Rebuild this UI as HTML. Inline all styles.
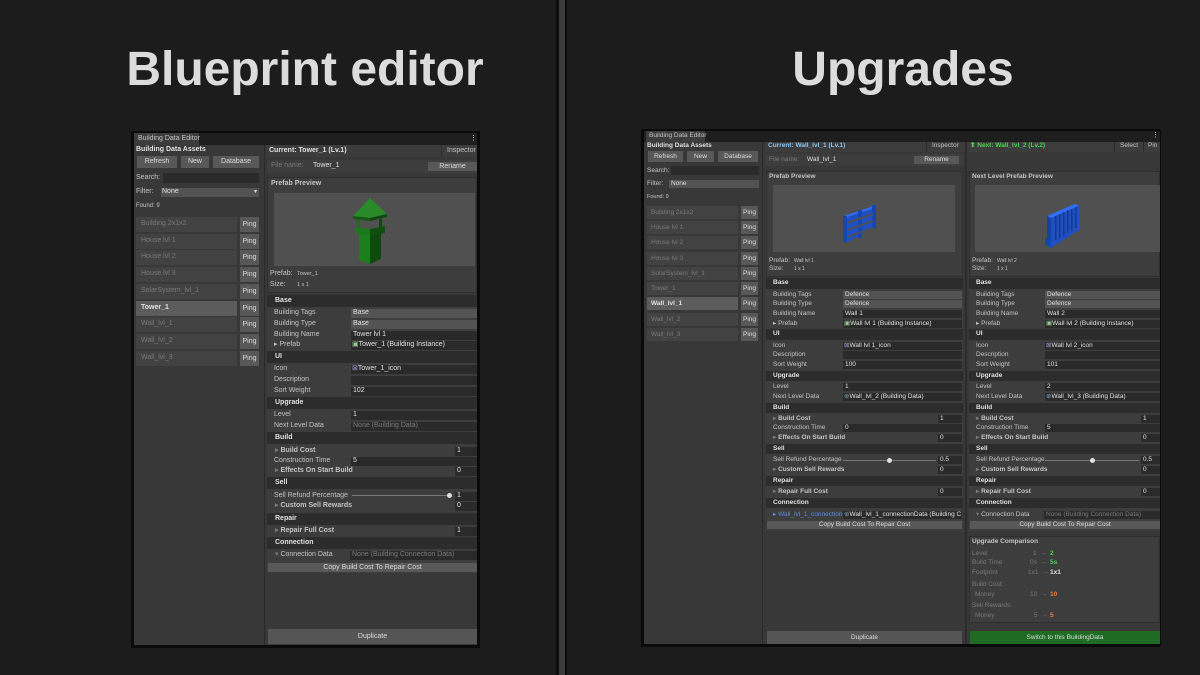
<!DOCTYPE html>
<html><head><meta charset="utf-8"><style>
*{margin:0;padding:0;box-sizing:border-box}
body{width:1200px;height:675px;background:#1c1c1c;position:relative;overflow:hidden;font-family:"Liberation Sans",sans-serif;color:#c4c4c4}
div{position:absolute}
.t{font-size:7px;line-height:10px;height:10px;white-space:nowrap}
.b{font-weight:bold}
.d{color:#7a7a7a}
.w{color:#e0e0e0}
.h{background:#2c2c2c}
.r{background:#3d3d3d}
.f{background:#2a2a2a}
.dd{background:#535353}
.btn{background:#585858;color:#ddd;text-align:center;font-size:7px}
.title{font-size:48px;font-weight:bold;color:#dcdcdc;top:40px;line-height:60px;white-space:nowrap;text-align:center}
</style></head><body>

<div class="title" style="left:105px;width:400px">Blueprint editor</div>
<div class="title" style="left:703px;width:400px">Upgrades</div>

<div style="left:556px;top:0;width:11px;height:675px;background:#0d0d0d"></div>
<div style="left:559px;top:0;width:6px;height:675px;background:#3a3a3a"></div>

<!-- ================= LEFT WINDOW ================= -->
<div style="left:131px;top:131px;width:349px;height:517px;background:#0a0a0a"></div>
<div style="left:134px;top:133px;width:343px;height:512px;background:#383838"></div>
<div style="left:134px;top:133px;width:343px;height:12px;background:#1e1e1e"></div>
<div style="left:134px;top:133px;width:65px;height:12px;background:#3c3c3c"></div>
<div class="t" style="left:138px;top:134px">Building Data Editor</div>
<div class="t w" style="left:470px;top:134px">⋮</div>
<div style="left:264px;top:145px;width:1px;height:500px;background:#2a2a2a"></div>

<div class="t b w" style="left:136px;top:145px">Building Data Assets</div>
<div class="btn" style="left:137px;top:156px;width:40px;height:12px;line-height:12px">Refresh</div>
<div class="btn" style="left:181px;top:156px;width:28px;height:12px;line-height:12px">New</div>
<div class="btn" style="left:213px;top:156px;width:46px;height:12px;line-height:12px">Database</div>
<div class="t" style="left:136px;top:173px">Search:</div>
<div class="f" style="left:163px;top:173px;width:96px;height:10px"></div>
<div class="t" style="left:136px;top:187px">Filter:</div>
<div class="dd" style="left:161px;top:188px;width:98px;height:9px"></div>
<div class="t w" style="left:162px;top:187px">None</div>
<div class="t w" style="left:253px;top:187px;font-size:5px">▼</div>
<div class="t" style="left:136px;top:201px;font-size:6px">Found: 9</div>

<div style="left:136px;top:217px;width:101px;height:15px;background:#424242"></div><div class="btn" style="left:240px;top:217px;width:19px;height:15px;line-height:15px">Ping</div><div class="t d" style="left:141px;top:219px">Building 2x1x2</div>
<div style="left:136px;top:234px;width:101px;height:15px;background:#424242"></div><div class="btn" style="left:240px;top:234px;width:19px;height:15px;line-height:15px">Ping</div><div class="t d" style="left:141px;top:236px">House lvl 1</div>
<div style="left:136px;top:250px;width:101px;height:15px;background:#424242"></div><div class="btn" style="left:240px;top:250px;width:19px;height:15px;line-height:15px">Ping</div><div class="t d" style="left:141px;top:252px">House lvl 2</div>
<div style="left:136px;top:267px;width:101px;height:15px;background:#424242"></div><div class="btn" style="left:240px;top:267px;width:19px;height:15px;line-height:15px">Ping</div><div class="t d" style="left:141px;top:269px">House lvl 3</div>
<div style="left:136px;top:284px;width:101px;height:15px;background:#424242"></div><div class="btn" style="left:240px;top:284px;width:19px;height:15px;line-height:15px">Ping</div><div class="t d" style="left:141px;top:286px">SolarSystem_lvl_1</div>
<div style="left:136px;top:301px;width:101px;height:15px;background:#5c5c5c"></div><div class="btn" style="left:240px;top:301px;width:19px;height:15px;line-height:15px">Ping</div><div class="t b w" style="left:141px;top:303px">Tower_1</div>
<div style="left:136px;top:317px;width:101px;height:15px;background:#424242"></div><div class="btn" style="left:240px;top:317px;width:19px;height:15px;line-height:15px">Ping</div><div class="t d" style="left:141px;top:319px">Wall_lvl_1</div>
<div style="left:136px;top:334px;width:101px;height:15px;background:#424242"></div><div class="btn" style="left:240px;top:334px;width:19px;height:15px;line-height:15px">Ping</div><div class="t d" style="left:141px;top:336px">Wall_lvl_2</div>
<div style="left:136px;top:351px;width:101px;height:15px;background:#424242"></div><div class="btn" style="left:240px;top:351px;width:19px;height:15px;line-height:15px">Ping</div><div class="t d" style="left:141px;top:353px">Wall_lvl_3</div>

<!-- right pane -->
<div style="left:266px;top:145px;width:211px;height:12px;background:#3c3c3c"></div>
<div class="t b w" style="left:269px;top:146px">Current: Tower_1 (Lv.1)</div>
<div style="left:441px;top:145px;width:1px;height:12px;background:#2a2a2a"></div>
<div class="t" style="left:447px;top:146px">Inspector</div>
<div class="r" style="left:267px;top:160px;width:210px;height:13px"></div>
<div class="t d" style="left:271px;top:161px">File name:</div>
<div class="t w" style="left:313px;top:161px">Tower_1</div>
<div class="btn" style="left:428px;top:162px;width:49px;height:9px;line-height:9px">Rename</div>

<div class="r" style="left:267px;top:177px;width:210px;height:116px;border:1px solid #2e2e2e"></div>
<div class="t b" style="left:271px;top:179px">Prefab Preview</div>
<div style="left:274px;top:193px;width:201px;height:73px;background:#505050"></div>
<svg style="position:absolute;left:345px;top:196px" width="50" height="70" viewBox="0 0 50 70">
<polygon points="25,2 8,20 25,22 42,18" fill="#2a8a2a"/><polygon points="8,20 25,22 25,25 8,23" fill="#145a14"/><polygon points="25,22 42,18 42,21 25,25" fill="#0f480f"/>
<rect x="12" y="24" width="3" height="8" fill="#157015"/><rect x="34" y="23" width="3" height="8" fill="#0f480f"/>
<polygon points="10,31 25,33 25,40 10,37" fill="#1a7a1a"/><polygon points="25,33 40,30 40,37 25,40" fill="#0f500f"/>
<polygon points="14,38 25,40 25,68 14,64" fill="#1b7f1b"/><polygon points="25,40 36,37 36,63 25,68" fill="#0e4a0e"/>
</svg>
<div class="t" style="left:270px;top:269px">Prefab:</div><div class="t" style="left:297px;top:269px;font-size:5.5px">Tower_1</div>
<div class="t" style="left:270px;top:280px">Size:</div><div class="t" style="left:297px;top:280px;font-size:5.5px">1 x 1</div>

<div class="r" style="left:267px;top:295px;width:210px;height:278px"></div>
<div class="h" style="left:267px;top:295px;width:210px;height:12px"></div><div class="t b w" style="left:275px;top:296px">Base</div>
<div class="t" style="left:274px;top:308px">Building Tags</div><div class="dd" style="left:351px;top:309px;width:126px;height:9px"></div><div class="t w" style="left:353px;top:308px">Base</div>
<div class="t" style="left:274px;top:319px">Building Type</div><div class="dd" style="left:351px;top:320px;width:126px;height:9px"></div><div class="t w" style="left:353px;top:319px">Base</div>
<div class="t" style="left:274px;top:330px">Building Name</div><div class="f" style="left:351px;top:331px;width:126px;height:9px"></div><div class="t w" style="left:353px;top:330px">Tower lvl 1</div>
<div class="t" style="left:274px;top:340px">▸ Prefab</div><div class="f" style="left:351px;top:341px;width:126px;height:9px"></div><div class="t w" style="left:352px;top:340px"><span style="color:#9c9">▣</span>Tower_1 (Building Instance)</div>
<div class="h" style="left:267px;top:351px;width:210px;height:12px"></div><div class="t b w" style="left:275px;top:352px">UI</div>
<div class="t" style="left:274px;top:364px">Icon</div><div class="f" style="left:351px;top:365px;width:126px;height:9px"></div><div class="t w" style="left:352px;top:364px"><span style="color:#99c">⊠</span>Tower_1_icon</div>
<div class="t" style="left:274px;top:375px">Description</div><div class="f" style="left:351px;top:376px;width:126px;height:9px"></div>
<div class="t" style="left:274px;top:386px">Sort Weight</div><div class="f" style="left:351px;top:387px;width:126px;height:9px"></div><div class="t w" style="left:353px;top:386px">102</div>
<div class="h" style="left:267px;top:397px;width:210px;height:12px"></div><div class="t b w" style="left:275px;top:398px">Upgrade</div>
<div class="t" style="left:274px;top:410px">Level</div><div class="f" style="left:351px;top:411px;width:126px;height:9px"></div><div class="t w" style="left:353px;top:410px">1</div>
<div class="t" style="left:274px;top:421px">Next Level Data</div><div class="f" style="left:351px;top:422px;width:126px;height:9px"></div><div class="t d" style="left:353px;top:421px">None (Building Data)</div>
<div class="h" style="left:267px;top:432px;width:210px;height:12px"></div><div class="t b w" style="left:275px;top:433px">Build</div>
<div class="t b" style="left:275px;top:446px"><span class="d">▸</span> Build Cost</div><div class="f" style="left:455px;top:447px;width:22px;height:9px"></div><div class="t w" style="left:457px;top:446px">1</div>
<div class="t" style="left:274px;top:456px">Construction Time</div><div class="f" style="left:351px;top:457px;width:126px;height:9px"></div><div class="t w" style="left:353px;top:456px">5</div>
<div class="t b" style="left:275px;top:466px"><span class="d">▸</span> Effects On Start Build</div><div class="f" style="left:455px;top:467px;width:22px;height:9px"></div><div class="t w" style="left:457px;top:466px">0</div>
<div class="h" style="left:267px;top:477px;width:210px;height:12px"></div><div class="t b w" style="left:275px;top:478px">Sell</div>
<div class="t" style="left:274px;top:491px">Sell Refund Percentage</div><div style="left:352px;top:495px;width:97px;height:1px;background:#777"></div><div style="left:447px;top:493px;width:5px;height:5px;border-radius:50%;background:#ddd"></div><div class="f" style="left:455px;top:492px;width:22px;height:9px"></div><div class="t w" style="left:457px;top:491px">1</div>
<div class="t b" style="left:275px;top:501px"><span class="d">▸</span> Custom Sell Rewards</div><div class="f" style="left:455px;top:502px;width:22px;height:9px"></div><div class="t w" style="left:457px;top:501px">0</div>
<div class="h" style="left:267px;top:513px;width:210px;height:12px"></div><div class="t b w" style="left:275px;top:514px">Repair</div>
<div class="t b" style="left:275px;top:526px"><span class="d">▸</span> Repair Full Cost</div><div class="f" style="left:455px;top:527px;width:22px;height:9px"></div><div class="t w" style="left:457px;top:526px">1</div>
<div class="h" style="left:267px;top:537px;width:210px;height:12px"></div><div class="t b w" style="left:275px;top:538px">Connection</div>
<div class="t" style="left:275px;top:550px"><span class="d">▾</span> Connection Data</div><div class="f" style="left:350px;top:551px;width:127px;height:9px"></div><div class="t d" style="left:352px;top:550px">None (Building Connection Data)</div>
<div class="btn" style="left:268px;top:563px;width:209px;height:9px;line-height:9px">Copy Build Cost To Repair Cost</div>
<div class="btn" style="left:268px;top:629px;width:209px;height:15px;line-height:15px;background:#555">Duplicate</div>

<!-- ================= RIGHT WINDOW ================= -->
<div style="left:641px;top:129px;width:520px;height:518px;background:#0a0a0a"></div>
<div style="left:644px;top:131px;width:516px;height:513px;background:#383838"></div>
<div style="left:644px;top:131px;width:516px;height:11px;background:#1e1e1e"></div>
<div style="left:646px;top:131px;width:59px;height:11px;background:#3c3c3c"></div>
<div class="t" style="left:649px;top:131px;font-size:6.5px">Building Data Editor</div>
<div class="t w" style="left:1152px;top:131px">⋮</div>
<div style="left:762px;top:142px;width:1px;height:502px;background:#2a2a2a"></div>

<div class="t b w" style="left:647px;top:141px;font-size:6.5px">Building Data Assets</div>
<div class="btn" style="left:648px;top:151px;width:35px;height:11px;line-height:11px;font-size:6.5px">Refresh</div>
<div class="btn" style="left:687px;top:151px;width:27px;height:11px;line-height:11px;font-size:6.5px">New</div>
<div class="btn" style="left:718px;top:151px;width:40px;height:11px;line-height:11px;font-size:6.5px">Database</div>
<div class="t" style="left:647px;top:166px;font-size:6.5px">Search:</div>
<div class="f" style="left:671px;top:166px;width:88px;height:9px"></div>
<div class="t" style="left:647px;top:179px;font-size:6.5px">Filter:</div>
<div class="dd" style="left:669px;top:180px;width:90px;height:8px"></div>
<div class="t w" style="left:671px;top:179px;font-size:6.5px">None</div>
<div class="t" style="left:647px;top:192px;font-size:5.5px">Found: 9</div>

<div style="left:647px;top:206px;width:91px;height:13px;background:#424242"></div><div class="btn" style="left:741px;top:206px;width:17px;height:13px;line-height:13px;font-size:6.5px">Ping</div><div class="t d" style="left:651px;top:208px;font-size:6.5px">Building 2x1x2</div>
<div style="left:647px;top:221px;width:91px;height:13px;background:#424242"></div><div class="btn" style="left:741px;top:221px;width:17px;height:13px;line-height:13px;font-size:6.5px">Ping</div><div class="t d" style="left:651px;top:223px;font-size:6.5px">House lvl 1</div>
<div style="left:647px;top:236px;width:91px;height:13px;background:#424242"></div><div class="btn" style="left:741px;top:236px;width:17px;height:13px;line-height:13px;font-size:6.5px">Ping</div><div class="t d" style="left:651px;top:238px;font-size:6.5px">House lvl 2</div>
<div style="left:647px;top:252px;width:91px;height:13px;background:#424242"></div><div class="btn" style="left:741px;top:252px;width:17px;height:13px;line-height:13px;font-size:6.5px">Ping</div><div class="t d" style="left:651px;top:254px;font-size:6.5px">House lvl 3</div>
<div style="left:647px;top:267px;width:91px;height:13px;background:#424242"></div><div class="btn" style="left:741px;top:267px;width:17px;height:13px;line-height:13px;font-size:6.5px">Ping</div><div class="t d" style="left:651px;top:269px;font-size:6.5px">SolarSystem_lvl_1</div>
<div style="left:647px;top:282px;width:91px;height:13px;background:#424242"></div><div class="btn" style="left:741px;top:282px;width:17px;height:13px;line-height:13px;font-size:6.5px">Ping</div><div class="t d" style="left:651px;top:284px;font-size:6.5px">Tower_1</div>
<div style="left:647px;top:297px;width:91px;height:13px;background:#5c5c5c"></div><div class="btn" style="left:741px;top:297px;width:17px;height:13px;line-height:13px;font-size:6.5px">Ping</div><div class="t b w" style="left:651px;top:299px;font-size:6.5px">Wall_lvl_1</div>
<div style="left:647px;top:313px;width:91px;height:13px;background:#424242"></div><div class="btn" style="left:741px;top:313px;width:17px;height:13px;line-height:13px;font-size:6.5px">Ping</div><div class="t d" style="left:651px;top:315px;font-size:6.5px">Wall_lvl_2</div>
<div style="left:647px;top:328px;width:91px;height:13px;background:#424242"></div><div class="btn" style="left:741px;top:328px;width:17px;height:13px;line-height:13px;font-size:6.5px">Ping</div><div class="t d" style="left:651px;top:330px;font-size:6.5px">Wall_lvl_3</div>

<!-- middle pane -->
<div style="left:765px;top:142px;width:395px;height:10px;background:#3c3c3c"></div>
<div class="t b" style="left:768px;top:141px;font-size:6.5px;color:#8cc4f0">Current: Wall_lvl_1 (Lv.1)</div>
<div style="left:926px;top:142px;width:1px;height:10px;background:#2a2a2a"></div>
<div class="t" style="left:932px;top:141px;font-size:6.5px">Inspector</div>
<div style="left:965px;top:142px;width:2px;height:502px;background:#2c2c2c"></div>
<div class="t b" style="left:970px;top:141px;font-size:6.5px;color:#4fd24f">⬆ Next: Wall_lvl_2 (Lv.2)</div>
<div style="left:1114px;top:142px;width:1px;height:10px;background:#2a2a2a"></div>
<div class="t" style="left:1120px;top:141px;font-size:6.5px">Select</div>
<div style="left:1143px;top:142px;width:1px;height:10px;background:#2a2a2a"></div>
<div class="t" style="left:1148px;top:141px;font-size:6.5px">Pin</div>

<div class="r" style="left:766px;top:154px;width:197px;height:12px"></div>
<div class="t d" style="left:769px;top:155px;font-size:6.5px">File name:</div>
<div class="t w" style="left:807px;top:155px;font-size:6.5px">Wall_lvl_1</div>
<div class="btn" style="left:914px;top:156px;width:45px;height:8px;line-height:8px;font-size:6.5px">Rename</div>

<div class="r" style="left:766px;top:171px;width:197px;height:106px;border:1px solid #2e2e2e"></div>
<div class="t b" style="left:769px;top:172px;font-size:6.5px">Prefab Preview</div>
<div style="left:773px;top:185px;width:182px;height:67px;background:#505050"></div>
<svg style="position:absolute;left:840px;top:200px" width="40" height="45" viewBox="0 0 40 45">
<polygon points="4,16 34,6 36,26 8,42" fill="#1f4fc0"/>
<polygon points="4,16 34,6 34,8 4,18" fill="#3070ff"/>
<rect x="3" y="16" width="4" height="26" fill="#1846b0"/><rect x="18" y="10" width="4" height="28" fill="#1846b0"/><rect x="32" y="5" width="4" height="24" fill="#1846b0"/>
<polygon points="7,22 33,13 33,15 7,24" fill="#505050"/><polygon points="7,29 33,20 33,22 7,31" fill="#505050"/><polygon points="7,36 33,27 33,29 7,38" fill="#505050"/>
</svg>
<div class="t" style="left:769px;top:256px;font-size:6.5px">Prefab:</div><div class="t" style="left:794px;top:256px;font-size:5px">Wall lvl 1</div>
<div class="t" style="left:769px;top:264px;font-size:6.5px">Size:</div><div class="t" style="left:794px;top:264px;font-size:5px">1 x 1</div>

<div class="r" style="left:766px;top:278px;width:197px;height:253px"></div>
<div class="h" style="left:766px;top:278px;width:197px;height:11px"></div><div class="t b w" style="left:773px;top:278px;font-size:6.5px">Base</div>
<div class="t" style="left:773px;top:290px;font-size:6.5px">Building Tags</div><div class="dd" style="left:843px;top:291px;width:119px;height:8px"></div><div class="t w" style="left:845px;top:290px;font-size:6.5px">Defence</div>
<div class="t" style="left:773px;top:299px;font-size:6.5px">Building Type</div><div class="dd" style="left:843px;top:300px;width:119px;height:8px"></div><div class="t w" style="left:845px;top:299px;font-size:6.5px">Defence</div>
<div class="t" style="left:773px;top:309px;font-size:6.5px">Building Name</div><div class="f" style="left:843px;top:310px;width:119px;height:8px"></div><div class="t w" style="left:845px;top:309px;font-size:6.5px">Wall 1</div>
<div class="t" style="left:773px;top:319px;font-size:6.5px">▸ Prefab</div><div class="f" style="left:843px;top:320px;width:119px;height:8px"></div><div class="t w" style="left:844px;top:319px;font-size:6.5px"><span style="color:#9c9">▣</span>Wall lvl 1 (Building Instance)</div>
<div class="h" style="left:766px;top:329px;width:197px;height:11px"></div><div class="t b w" style="left:773px;top:329px;font-size:6.5px">UI</div>
<div class="t" style="left:773px;top:341px;font-size:6.5px">Icon</div><div class="f" style="left:843px;top:342px;width:119px;height:8px"></div><div class="t w" style="left:844px;top:341px;font-size:6.5px"><span style="color:#99c">⊠</span>Wall lvl 1_icon</div>
<div class="t" style="left:773px;top:350px;font-size:6.5px">Description</div><div class="f" style="left:843px;top:351px;width:119px;height:8px"></div>
<div class="t" style="left:773px;top:360px;font-size:6.5px">Sort Weight</div><div class="f" style="left:843px;top:361px;width:119px;height:8px"></div><div class="t w" style="left:845px;top:360px;font-size:6.5px">100</div>
<div class="h" style="left:766px;top:371px;width:197px;height:10px"></div><div class="t b w" style="left:773px;top:371px;font-size:6.5px">Upgrade</div>
<div class="t" style="left:773px;top:382px;font-size:6.5px">Level</div><div class="f" style="left:843px;top:383px;width:119px;height:8px"></div><div class="t w" style="left:845px;top:382px;font-size:6.5px">1</div>
<div class="t" style="left:773px;top:392px;font-size:6.5px">Next Level Data</div><div class="f" style="left:843px;top:393px;width:119px;height:8px"></div><div class="t w" style="left:844px;top:392px;font-size:6.5px"><span style="color:#7ab">⊛</span>Wall_lvl_2 (Building Data)</div>
<div class="h" style="left:766px;top:403px;width:197px;height:10px"></div><div class="t b w" style="left:773px;top:403px;font-size:6.5px">Build</div>
<div class="t b" style="left:773px;top:414px;font-size:6.5px"><span class="d">▸</span> Build Cost</div><div class="f" style="left:938px;top:415px;width:24px;height:8px"></div><div class="t w" style="left:940px;top:414px;font-size:6.5px">1</div>
<div class="t" style="left:773px;top:423px;font-size:6.5px">Construction Time</div><div class="f" style="left:843px;top:424px;width:119px;height:8px"></div><div class="t w" style="left:845px;top:423px;font-size:6.5px">0</div>
<div class="t b" style="left:773px;top:433px;font-size:6.5px"><span class="d">▸</span> Effects On Start Build</div><div class="f" style="left:938px;top:434px;width:24px;height:8px"></div><div class="t w" style="left:940px;top:433px;font-size:6.5px">0</div>
<div class="h" style="left:766px;top:444px;width:197px;height:10px"></div><div class="t b w" style="left:773px;top:444px;font-size:6.5px">Sell</div>
<div class="t" style="left:773px;top:455px;font-size:6.5px">Sell Refund Percentage</div><div style="left:843px;top:460px;width:93px;height:1px;background:#777"></div><div style="left:887px;top:458px;width:5px;height:5px;border-radius:50%;background:#ddd"></div><div class="f" style="left:938px;top:456px;width:24px;height:8px"></div><div class="t w" style="left:940px;top:455px;font-size:6.5px">0.5</div>
<div class="t b" style="left:773px;top:465px;font-size:6.5px"><span class="d">▸</span> Custom Sell Rewards</div><div class="f" style="left:938px;top:466px;width:24px;height:8px"></div><div class="t w" style="left:940px;top:465px;font-size:6.5px">0</div>
<div class="h" style="left:766px;top:476px;width:197px;height:10px"></div><div class="t b w" style="left:773px;top:476px;font-size:6.5px">Repair</div>
<div class="t b" style="left:773px;top:487px;font-size:6.5px"><span class="d">▸</span> Repair Full Cost</div><div class="f" style="left:938px;top:488px;width:24px;height:8px"></div><div class="t w" style="left:940px;top:487px;font-size:6.5px">0</div>
<div class="h" style="left:766px;top:498px;width:197px;height:10px"></div><div class="t b w" style="left:773px;top:498px;font-size:6.5px">Connection</div>
<div class="t" style="left:773px;top:510px;font-size:6.5px;color:#5a8fe0;width:69px;overflow:hidden">▸ Wall_lvl_1_connectionData</div><div class="f" style="left:843px;top:511px;width:119px;height:8px"></div><div class="t w" style="left:844px;top:510px;font-size:6.5px;width:117px;overflow:hidden"><span style="color:#7ab">⊛</span>Wall_lvl_1_connectionData (Building Con</div>
<div class="btn" style="left:767px;top:521px;width:195px;height:8px;line-height:8px;font-size:6.5px">Copy Build Cost To Repair Cost</div>
<div class="btn" style="left:767px;top:631px;width:195px;height:13px;line-height:13px;font-size:6.5px;background:#555">Duplicate</div>

<!-- third pane -->
<div class="r" style="left:969px;top:171px;width:191px;height:106px;border:1px solid #2e2e2e"></div>
<div class="t b" style="left:972px;top:172px;font-size:6.5px">Next Level Prefab Preview</div>
<div style="left:975px;top:185px;width:185px;height:67px;background:#505050"></div>
<svg style="position:absolute;left:1043px;top:200px" width="40" height="50" viewBox="0 0 40 50">
<polygon points="4,16 32,4 36,6 8,18" fill="#3070ff"/>
<polygon points="4,16 8,18 8,48 4,45" fill="#1640a0"/>
<polygon points="8,18 36,6 36,30 8,48" fill="#1f4fc0"/>
<polygon points="2,38 8,40 8,48 2,45" fill="#1846b0"/>
<g fill="#123a90"><rect x="12" y="16" width="1.5" height="24"/><rect x="16" y="14" width="1.5" height="24"/><rect x="20" y="12" width="1.5" height="24"/><rect x="24" y="10" width="1.5" height="23"/><rect x="28" y="9" width="1.5" height="22"/><rect x="32" y="7" width="1.5" height="21"/></g>
</svg>
<div class="t" style="left:972px;top:256px;font-size:6.5px">Prefab:</div><div class="t" style="left:997px;top:256px;font-size:5px">Wall lvl 2</div>
<div class="t" style="left:972px;top:264px;font-size:6.5px">Size:</div><div class="t" style="left:997px;top:264px;font-size:5px">1 x 1</div>

<div class="r" style="left:969px;top:278px;width:191px;height:253px"></div>
<div class="h" style="left:969px;top:278px;width:191px;height:11px"></div><div class="t b w" style="left:976px;top:278px;font-size:6.5px">Base</div>
<div class="t" style="left:976px;top:290px;font-size:6.5px">Building Tags</div><div class="dd" style="left:1045px;top:291px;width:115px;height:8px"></div><div class="t w" style="left:1047px;top:290px;font-size:6.5px">Defence</div>
<div class="t" style="left:976px;top:299px;font-size:6.5px">Building Type</div><div class="dd" style="left:1045px;top:300px;width:115px;height:8px"></div><div class="t w" style="left:1047px;top:299px;font-size:6.5px">Defence</div>
<div class="t" style="left:976px;top:309px;font-size:6.5px">Building Name</div><div class="f" style="left:1045px;top:310px;width:115px;height:8px"></div><div class="t w" style="left:1047px;top:309px;font-size:6.5px">Wall 2</div>
<div class="t" style="left:976px;top:319px;font-size:6.5px">▸ Prefab</div><div class="f" style="left:1045px;top:320px;width:115px;height:8px"></div><div class="t w" style="left:1046px;top:319px;font-size:6.5px"><span style="color:#9c9">▣</span>Wall lvl 2 (Building Instance)</div>
<div class="h" style="left:969px;top:329px;width:191px;height:11px"></div><div class="t b w" style="left:976px;top:329px;font-size:6.5px">UI</div>
<div class="t" style="left:976px;top:341px;font-size:6.5px">Icon</div><div class="f" style="left:1045px;top:342px;width:115px;height:8px"></div><div class="t w" style="left:1046px;top:341px;font-size:6.5px"><span style="color:#99c">⊠</span>Wall lvl 2_icon</div>
<div class="t" style="left:976px;top:350px;font-size:6.5px">Description</div><div class="f" style="left:1045px;top:351px;width:115px;height:8px"></div>
<div class="t" style="left:976px;top:360px;font-size:6.5px">Sort Weight</div><div class="f" style="left:1045px;top:361px;width:115px;height:8px"></div><div class="t w" style="left:1047px;top:360px;font-size:6.5px">101</div>
<div class="h" style="left:969px;top:371px;width:191px;height:10px"></div><div class="t b w" style="left:976px;top:371px;font-size:6.5px">Upgrade</div>
<div class="t" style="left:976px;top:382px;font-size:6.5px">Level</div><div class="f" style="left:1045px;top:383px;width:115px;height:8px"></div><div class="t w" style="left:1047px;top:382px;font-size:6.5px">2</div>
<div class="t" style="left:976px;top:392px;font-size:6.5px">Next Level Data</div><div class="f" style="left:1045px;top:393px;width:115px;height:8px"></div><div class="t w" style="left:1046px;top:392px;font-size:6.5px"><span style="color:#7ab">⊛</span>Wall_lvl_3 (Building Data)</div>
<div class="h" style="left:969px;top:403px;width:191px;height:10px"></div><div class="t b w" style="left:976px;top:403px;font-size:6.5px">Build</div>
<div class="t b" style="left:976px;top:414px;font-size:6.5px"><span class="d">▸</span> Build Cost</div><div class="f" style="left:1141px;top:415px;width:19px;height:8px"></div><div class="t w" style="left:1143px;top:414px;font-size:6.5px">1</div>
<div class="t" style="left:976px;top:423px;font-size:6.5px">Construction Time</div><div class="f" style="left:1045px;top:424px;width:115px;height:8px"></div><div class="t w" style="left:1047px;top:423px;font-size:6.5px">5</div>
<div class="t b" style="left:976px;top:433px;font-size:6.5px"><span class="d">▸</span> Effects On Start Build</div><div class="f" style="left:1141px;top:434px;width:19px;height:8px"></div><div class="t w" style="left:1143px;top:433px;font-size:6.5px">0</div>
<div class="h" style="left:969px;top:444px;width:191px;height:10px"></div><div class="t b w" style="left:976px;top:444px;font-size:6.5px">Sell</div>
<div class="t" style="left:976px;top:455px;font-size:6.5px">Sell Refund Percentage</div><div style="left:1045px;top:460px;width:94px;height:1px;background:#777"></div><div style="left:1090px;top:458px;width:5px;height:5px;border-radius:50%;background:#ddd"></div><div class="f" style="left:1141px;top:456px;width:19px;height:8px"></div><div class="t w" style="left:1143px;top:455px;font-size:6.5px">0.5</div>
<div class="t b" style="left:976px;top:465px;font-size:6.5px"><span class="d">▸</span> Custom Sell Rewards</div><div class="f" style="left:1141px;top:466px;width:19px;height:8px"></div><div class="t w" style="left:1143px;top:465px;font-size:6.5px">0</div>
<div class="h" style="left:969px;top:476px;width:191px;height:10px"></div><div class="t b w" style="left:976px;top:476px;font-size:6.5px">Repair</div>
<div class="t b" style="left:976px;top:487px;font-size:6.5px"><span class="d">▸</span> Repair Full Cost</div><div class="f" style="left:1141px;top:488px;width:19px;height:8px"></div><div class="t w" style="left:1143px;top:487px;font-size:6.5px">0</div>
<div class="h" style="left:969px;top:498px;width:191px;height:10px"></div><div class="t b w" style="left:976px;top:498px;font-size:6.5px">Connection</div>
<div class="t" style="left:976px;top:510px;font-size:6.5px"><span class="d">▾</span> Connection Data</div><div class="f" style="left:1044px;top:511px;width:116px;height:8px"></div><div class="t d" style="left:1046px;top:510px;font-size:6.5px">None (Building Connection Data)</div>
<div class="btn" style="left:970px;top:521px;width:190px;height:8px;line-height:8px;font-size:6.5px">Copy Build Cost To Repair Cost</div>

<div class="r" style="left:969px;top:536px;width:191px;height:87px;border:1px solid #2e2e2e"></div>
<div class="t b" style="left:972px;top:537px;font-size:6.5px">Upgrade Comparison</div>
<div class="t d" style="left:972px;top:549px;font-size:6.5px">Level</div><div class="t d" style="left:1033px;top:549px;font-size:6.5px">1 &nbsp;→</div><div class="t b" style="left:1050px;top:549px;font-size:6.5px;color:#4fd24f">2</div>
<div class="t d" style="left:972px;top:558px;font-size:6.5px">Build Time</div><div class="t d" style="left:1030px;top:558px;font-size:6.5px">0s &nbsp;→</div><div class="t b" style="left:1050px;top:558px;font-size:6.5px;color:#4fd24f">5s</div>
<div class="t d" style="left:972px;top:568px;font-size:6.5px">Footprint</div><div class="t d" style="left:1028px;top:568px;font-size:6.5px">1x1 &nbsp;→</div><div class="t b w" style="left:1050px;top:568px;font-size:6.5px">1x1</div>
<div class="t d" style="left:972px;top:580px;font-size:6.5px">Build Cost:</div>
<div class="t d" style="left:975px;top:590px;font-size:6.5px">Money</div><div class="t d" style="left:1030px;top:590px;font-size:6.5px">10 &nbsp;→</div><div class="t b" style="left:1050px;top:590px;font-size:6.5px;color:#f07a3a">10</div>
<div class="t d" style="left:972px;top:601px;font-size:6.5px">Sell Rewards:</div>
<div class="t d" style="left:975px;top:611px;font-size:6.5px">Money</div><div class="t d" style="left:1034px;top:611px;font-size:6.5px">5 &nbsp;→</div><div class="t b" style="left:1050px;top:611px;font-size:6.5px;color:#f07a3a">5</div>
<div style="left:970px;top:631px;width:190px;height:13px;background:#1f6b24;color:#ddd;text-align:center;font-size:6.5px;line-height:13px">Switch to this BuildingData</div>

</body></html>
